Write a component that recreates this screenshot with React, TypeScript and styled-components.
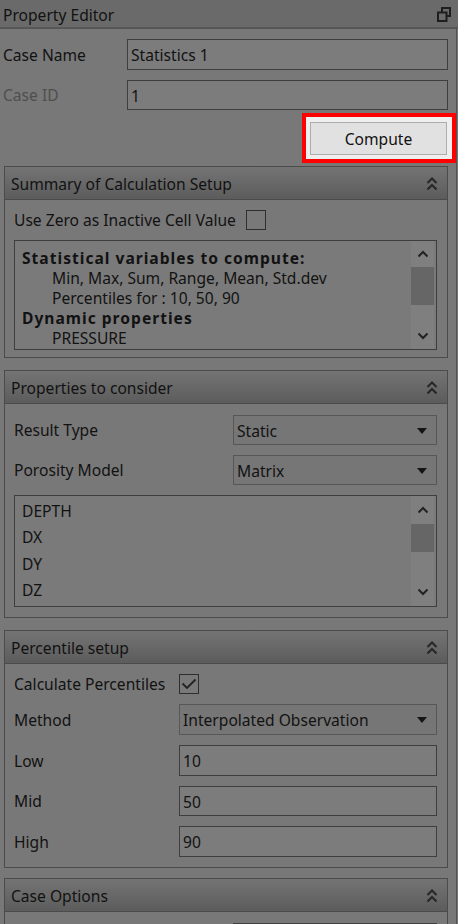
import React from 'react';
import styled, { createGlobalStyle } from 'styled-components';

const Global = createGlobalStyle`
  html, body { margin: 0; padding: 0; background: #787878; }
  body { font-family: "Noto Sans", "Liberation Sans", sans-serif; }
  * { box-sizing: border-box; }
`;

const Panel = styled.div`
  width: 458px;
  height: 924px;
  overflow: hidden;
  background: #787878;
  color: #121212;
  font-family: "Noto Sans", "Liberation Sans", sans-serif;
  font-size: 15.6px;
  display: flex;
  flex-direction: column;
`;

const TitleBar = styled.div`
  flex: none;
  height: 29px;
  display: flex;
  align-items: center;
  justify-content: space-between;
  padding: 2px 7px 0 3px;
  background: #6a6a6a;
  border-bottom: 2px solid #575757;
`;

const Title = styled.span`
  line-height: 20px;
`;

const Body = styled.div`
  flex: 1;
  display: flex;
  flex-direction: column;
  padding: 10px 8px 0 3px;
  margin-right: 1px;
  border-right: 1px solid #505050;
`;

const FieldStack = styled.div`
  display: flex;
  flex-direction: column;
  gap: 10px;
`;

const FieldRow = styled.div<{ $label: number; $h?: number }>`
  display: grid;
  grid-template-columns: ${(p) => p.$label}px 1fr;
  align-items: center;
  height: ${(p) => p.$h ?? 30}px;
`;

const Label = styled.span<{ $muted?: boolean }>`
  color: ${(p) => (p.$muted ? '#4f4f4f' : '#121212')};
  white-space: nowrap;
  line-height: 20px;
`;

const TextInput = styled.div`
  height: 100%;
  display: flex;
  align-items: center;
  padding: 1px 3px 0;
  background: #7c7c7c;
  border: 1.5px solid #3e3e3e;
  line-height: 20px;
`;

const Combo = styled.div`
  height: 100%;
  display: flex;
  align-items: center;
  justify-content: space-between;
  padding: 1px 9px 0 3px;
  background: #767676;
  border: 1.5px solid #575757;
  line-height: 20px;
`;

const Caret = styled.span`
  width: 0;
  height: 0;
  border-left: 5.5px solid transparent;
  border-right: 5.5px solid transparent;
  border-top: 6px solid #151515;
`;

const ComputeRow = styled.div`
  display: flex;
  justify-content: flex-end;
  margin: 3px -8px 0 0;
`;

const Highlight = styled.div`
  width: 154px;
  height: 50px;
  border: 4px solid #ff0000;
  background: #efefef;
  padding: 5px 5px 4px 4px;
  display: flex;
`;

const ComputeButton = styled.div`
  flex: 1;
  display: flex;
  align-items: center;
  justify-content: center;
  background: #e1e1e1;
  border: 1.5px solid #adadad;
  color: #111;
  font-size: 15.6px;
`;

const Group = styled.section<{ $top: number }>`
  margin: ${(p) => p.$top}px 0 0 1px;
  border: 1px solid #4b4b4b;
  display: flex;
  flex-direction: column;
`;

const GroupHeader = styled.div`
  height: 33px;
  display: flex;
  align-items: center;
  justify-content: space-between;
  padding: 1px 9px 0 6px;
  background: linear-gradient(#747474, #5c5c5c);
  border-bottom: 1px solid #4b4b4b;
  line-height: 20px;
`;

const GroupBody = styled.div<{ $pad: string }>`
  display: flex;
  flex-direction: column;
  gap: 10px;
  padding: ${(p) => p.$pad};
`;

const CheckLine = styled.div`
  display: flex;
  align-items: center;
  gap: 10px;
  height: 20px;
`;

const CheckBox = styled.span`
  width: 20px;
  height: 20px;
  border: 1.5px solid #2e2e2e;
  background: #797979;
  display: flex;
  align-items: center;
  justify-content: center;
`;

const ScrollBox = styled.div<{ $h: number }>`
  height: ${(p) => p.$h}px;
  display: flex;
  background: #7a7a7a;
  border: 1.5px solid #3e3e3e;
`;

const BoxContent = styled.div<{ $lh: number; $pt: number }>`
  flex: 1;
  padding: ${(p) => p.$pt}px 6px 0 7px;
  line-height: ${(p) => p.$lh}px;
  overflow: hidden;
`;

const Line = styled.div<{ $bold?: boolean; $indent?: boolean }>`
  font-weight: ${(p) => (p.$bold ? 700 : 400)};
  letter-spacing: ${(p) => (p.$bold ? 1 : 0)}px;
  padding-left: ${(p) => (p.$indent ? 30 : 0)}px;
  white-space: nowrap;
`;

const ScrollTrack = styled.div<{ $btn: number; $thumb: number }>`
  width: 23px;
  margin: 0 2px 0 0;
  background: #7f7f7f;
  display: grid;
  grid-template-rows: ${(p) => p.$btn}px ${(p) => p.$thumb}px 1fr ${(p) => p.$btn}px;
`;

const ScrollButton = styled.div`
  display: flex;
  align-items: center;
  justify-content: center;
`;

const Thumb = styled.div`
  background: #666666;
`;

const Chevron = ({ down }: { down?: boolean }) => (
  <svg width="12" height="8" viewBox="0 0 12 8">
    <path
      d={down ? 'M1.5 1.5 L6 6 L10.5 1.5' : 'M1.5 6.5 L6 2 L10.5 6.5'}
      fill="none"
      stroke="#222"
      strokeWidth="2"
    />
  </svg>
);

const Scrollbar = ({ btn, thumb }: { btn: number; thumb: number }) => (
  <ScrollTrack $btn={btn} $thumb={thumb}>
    <ScrollButton>
      <Chevron />
    </ScrollButton>
    <Thumb />
    <div />
    <ScrollButton>
      <Chevron down />
    </ScrollButton>
  </ScrollTrack>
);

const CollapseIcon = () => (
  <svg width="12" height="16" viewBox="0 0 12 16">
    <path d="M1.5 7 L6 2.5 L10.5 7" fill="none" stroke="#262626" strokeWidth="2" />
    <path d="M1.5 13.5 L6 9 L10.5 13.5" fill="none" stroke="#262626" strokeWidth="2" />
  </svg>
);

const RestoreIcon = () => (
  <svg width="14" height="15" viewBox="0 0 14 15">
    <rect x="5" y="1" width="8" height="8" fill="none" stroke="#1e1e1e" strokeWidth="2" />
    <rect x="1" y="5.5" width="8.5" height="8.5" fill="#6a6a6a" stroke="#1e1e1e" strokeWidth="2" />
  </svg>
);

const CheckMark = () => (
  <svg width="16" height="14" viewBox="0 0 16 14">
    <path d="M1.5 6.5 L6 11 L14.5 2.5" fill="none" stroke="#222" strokeWidth="1.8" />
  </svg>
);

const GroupBox = ({
  title,
  top,
  pad,
  children,
}: {
  title: string;
  top: number;
  pad: string;
  children: React.ReactNode;
}) => (
  <Group $top={top}>
    <GroupHeader>
      <span>{title}</span>
      <CollapseIcon />
    </GroupHeader>
    <GroupBody $pad={pad}>{children}</GroupBody>
  </Group>
);

export default function App() {
  return (
    <Panel>
      <Global />
      <TitleBar>
        <Title>Property Editor</Title>
        <RestoreIcon />
      </TitleBar>
      <Body>
        <FieldStack>
          <FieldRow $label={124} $h={31}>
            <Label>Case Name</Label>
            <TextInput>Statistics 1</TextInput>
          </FieldRow>
          <FieldRow $label={124} $h={30}>
            <Label $muted>Case ID</Label>
            <TextInput>1</TextInput>
          </FieldRow>
        </FieldStack>
        <ComputeRow>
          <Highlight>
            <ComputeButton>Compute</ComputeButton>
          </Highlight>
        </ComputeRow>

        <GroupBox title="Summary of Calculation Setup" top={3} pad="10px 10px 7px 9px">
          <CheckLine>
            <Label>Use Zero as Inactive Cell Value</Label>
            <CheckBox />
          </CheckLine>
          <ScrollBox $h={110}>
            <BoxContent $lh={20} $pt={7}>
              <Line $bold>Statistical variables to compute:</Line>
              <Line $indent>Min, Max, Sum, Range, Mean, Std.dev</Line>
              <Line $indent>Percentiles for : 10, 50, 90</Line>
              <Line $bold>Dynamic properties</Line>
              <Line $indent>PRESSURE</Line>
            </BoxContent>
            <Scrollbar btn={26} thumb={38} />
          </ScrollBox>
        </GroupBox>

        <GroupBox title="Properties to consider" top={12} pad="11px 10px 10px 9px">
          <FieldRow $label={219}>
            <Label>Result Type</Label>
            <Combo>
              Static
              <Caret />
            </Combo>
          </FieldRow>
          <FieldRow $label={219}>
            <Label>Porosity Model</Label>
            <Combo>
              Matrix
              <Caret />
            </Combo>
          </FieldRow>
          <ScrollBox $h={112}>
            <BoxContent $lh={26.4} $pt={2}>
              <Line>DEPTH</Line>
              <Line>DX</Line>
              <Line>DY</Line>
              <Line>DZ</Line>
            </BoxContent>
            <Scrollbar btn={28} thumb={28} />
          </ScrollBox>
        </GroupBox>

        <GroupBox title="Percentile setup" top={12} pad="10px 10px 10px 9px">
          <FieldRow $label={165} $h={20}>
            <Label>Calculate Percentiles</Label>
            <CheckBox>
              <CheckMark />
            </CheckBox>
          </FieldRow>
          <FieldRow $label={165} $h={31}>
            <Label>Method</Label>
            <Combo>
              Interpolated Observation
              <Caret />
            </Combo>
          </FieldRow>
          <FieldRow $label={165} $h={31}>
            <Label>Low</Label>
            <TextInput>10</TextInput>
          </FieldRow>
          <FieldRow $label={165} $h={30}>
            <Label>Mid</Label>
            <TextInput>50</TextInput>
          </FieldRow>
          <FieldRow $label={165} $h={31}>
            <Label>High</Label>
            <TextInput>90</TextInput>
          </FieldRow>
        </GroupBox>

        <GroupBox title="Case Options" top={10} pad="11px 10px 10px 9px">
          <FieldRow $label={219}>
            <span />
            <TextInput />
          </FieldRow>
        </GroupBox>
      </Body>
    </Panel>
  );
}
